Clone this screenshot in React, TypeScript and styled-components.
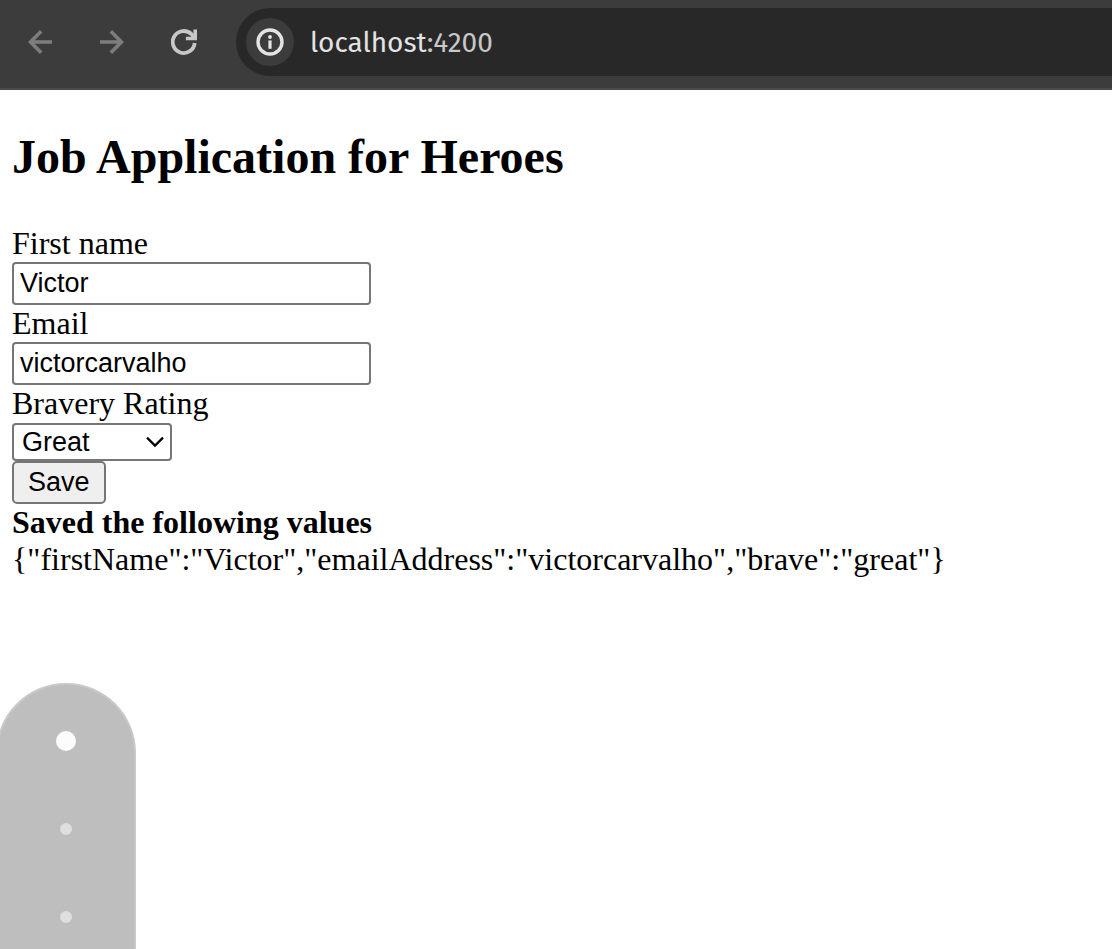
import React, { useState } from "react";
import styled, { createGlobalStyle } from "styled-components";

const GlobalStyle = createGlobalStyle`
  *, *::before, *::after { box-sizing: border-box; }
  body {
    margin: 0;
    background: #ffffff;
    color: #000000;
    font-family: "Liberation Serif", "Times New Roman", serif;
    font-size: 32px;
    line-height: 37px;
  }
`;

const Toolbar = styled.header`
  display: flex;
  align-items: center;
  height: 90px;
  padding: 8px 0 12px 4px;
  background: #3c3c3c;
  border-bottom: 2px solid #4a484a;
`;

const NavButton = styled.button<{ $active?: boolean }>`
  display: grid;
  place-items: center;
  flex: none;
  width: 72px;
  height: 68px;
  padding: 0;
  border: 0;
  background: none;
  color: ${(p) => (p.$active ? "#c7c7c7" : "#7d7d7d")};
`;

const AddressBar = styled.div`
  display: flex;
  flex: 1;
  align-items: center;
  gap: 16px;
  height: 68px;
  margin-left: 16px;
  padding-left: 10px;
  border-radius: 34px 0 0 34px;
  background: #282828;
`;

const SiteInfo = styled.button`
  display: grid;
  place-items: center;
  flex: none;
  width: 48px;
  height: 48px;
  padding: 0;
  border: 0;
  border-radius: 50%;
  background: #3c3c3c;
  color: #e3e3e3;
`;

const Url = styled.span`
  color: #e3e3e3;
  font-family: "Fira Sans", "Noto Sans", sans-serif;
  font-size: 28px;
`;

const Port = styled.span`
  color: #c7c7c7;
`;

const Content = styled.main`
  padding: 40px 12px;
`;

const Title = styled.h1`
  margin: 0 0 42px;
  font-size: 48px;
  line-height: 53px;
`;

const Form = styled.form`
  display: flex;
  flex-direction: column;
  align-items: flex-start;
`;

const TextInput = styled.input`
  width: 359px;
  max-width: 100%;
  height: 43px;
  padding: 0 6px;
  border: 2px solid #767676;
  border-radius: 4px;
  background: #ffffff;
  color: #000000;
  font-family: "Liberation Sans", Arial, sans-serif;
  font-size: 27px;
`;

const SelectBox = styled.div`
  display: grid;
  align-items: center;
  width: 160px;
  padding-top: 1px;

  & > * {
    grid-area: 1 / 1;
  }
`;

const Select = styled.select`
  appearance: none;
  width: 100%;
  height: 38px;
  padding: 0 8px;
  border: 2px solid #767676;
  border-radius: 4px;
  background: #ffffff;
  color: #000000;
  font-family: "Liberation Sans", Arial, sans-serif;
  font-size: 27px;
`;

const Chevron = styled.svg`
  justify-self: end;
  margin-right: 8px;
  pointer-events: none;
`;

const SaveButton = styled.button`
  height: 43px;
  padding: 0 14px;
  border: 2px solid #767676;
  border-radius: 5px;
  background: #efefef;
  color: #000000;
  font-family: "Liberation Sans", Arial, sans-serif;
  font-size: 27px;
`;

const Saved = styled.section`
  overflow-wrap: anywhere;
`;

const Dock = styled.nav`
  position: fixed;
  bottom: 0;
  left: -4px;
  display: flex;
  flex-direction: column;
  align-items: center;
  width: 140px;
  padding-top: 12px;
  border: 2px solid #c8c8c8;
  border-bottom: 0;
  border-radius: 70px 70px 0 0;
  background: #bebebe;
  height: 266px;
  overflow: hidden;
`;

const DockItem = styled.button<{ $current?: boolean }>`
  display: grid;
  place-items: center;
  flex: none;
  width: 88px;
  height: 88px;
  padding: 0;
  border: 0;
  background: none;

  &::before {
    content: "";
    width: ${(p) => (p.$current ? 20 : 12)}px;
    height: ${(p) => (p.$current ? 20 : 12)}px;
    border-radius: 50%;
    background: ${(p) => (p.$current ? "#fcfcfc" : "#dedede")};
  }
`;

export default function App() {
  const [firstName, setFirstName] = useState("Victor");
  const [emailAddress, setEmailAddress] = useState("victorcarvalho");
  const [brave, setBrave] = useState("great");
  const [saved, setSaved] = useState({
    firstName: "Victor",
    emailAddress: "victorcarvalho",
    brave: "great",
  });

  const save = (event: React.FormEvent) => {
    event.preventDefault();
    setSaved({ firstName, emailAddress, brave });
  };

  return (
    <>
      <GlobalStyle />
      <Toolbar>
        <NavButton type="button" aria-label="Back">
          <svg width="24" height="24" viewBox="0 0 24 24" fill="none" stroke="currentColor" strokeWidth="3.6">
            <path d="M24 12H2.5M13.2 1.3L2.5 12L13.2 22.7" />
          </svg>
        </NavButton>
        <NavButton type="button" aria-label="Forward">
          <svg width="24" height="24" viewBox="0 0 24 24" fill="none" stroke="currentColor" strokeWidth="3.6">
            <path d="M0 12H21.5M10.8 1.3L21.5 12L10.8 22.7" />
          </svg>
        </NavButton>
        <NavButton type="button" aria-label="Reload" $active>
          <svg width="26" height="26" viewBox="0 0 26 26" fill="none" stroke="currentColor" strokeWidth="3.8">
            <path d="M23.7 14A11 11 0 1 1 20.5 5.2L23 8" />
            <path d="M22.4 0.4H26V11.3H14.9V7.8H22.4Z" fill="currentColor" stroke="none" />
          </svg>
        </NavButton>
        <AddressBar>
          <SiteInfo type="button" aria-label="Site information">
            <svg width="28" height="28" viewBox="0 0 28 28" fill="currentColor">
              <circle cx="14" cy="14" r="12" fill="none" stroke="currentColor" strokeWidth="3.4" />
              <circle cx="14" cy="9" r="1.9" />
              <path d="M12.4 12.4h3.2v8.4h-3.2z" />
            </svg>
          </SiteInfo>
          <Url>
            localhost<Port>:4200</Port>
          </Url>
        </AddressBar>
      </Toolbar>

      <Content>
        <Title>Job Application for Heroes</Title>
        <Form onSubmit={save}>
          <label htmlFor="first-name">First name</label>
          <TextInput id="first-name" value={firstName} onChange={(e) => setFirstName(e.target.value)} />
          <label htmlFor="email">Email</label>
          <TextInput id="email" value={emailAddress} onChange={(e) => setEmailAddress(e.target.value)} />
          <label htmlFor="brave">Bravery Rating</label>
          <SelectBox>
            <Select id="brave" value={brave} onChange={(e) => setBrave(e.target.value)}>
              <option value="great">Great</option>
              <option value="good">Good</option>
              <option value="fair">Fair</option>
            </Select>
            <Chevron width="18" height="12" viewBox="0 0 18 12" fill="none" stroke="#000000" strokeWidth="2.2">
              <path d="M1 1.6L9 9.6L17 1.6" />
            </Chevron>
          </SelectBox>
          <SaveButton type="submit">Save</SaveButton>
        </Form>
        <Saved>
          <strong>Saved the following values</strong>
          <div>{JSON.stringify(saved)}</div>
        </Saved>
      </Content>

      <Dock aria-label="Sections">
        <DockItem type="button" aria-label="Section 1" $current />
        <DockItem type="button" aria-label="Section 2" />
        <DockItem type="button" aria-label="Section 3" />
      </Dock>
    </>
  );
}
